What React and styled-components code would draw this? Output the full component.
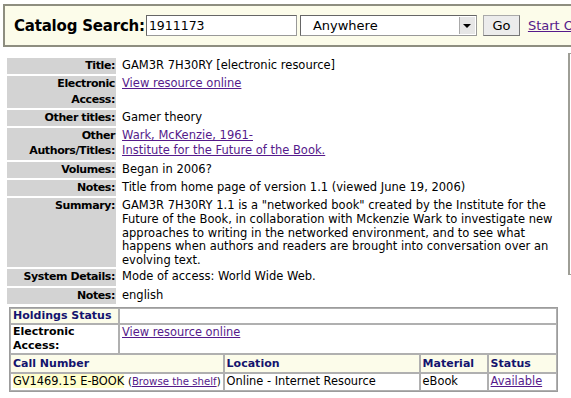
import React from 'react'
import styled, { createGlobalStyle } from 'styled-components'

const GlobalStyle = createGlobalStyle`
body{
    margin:0;
    background:#fff;
    font-family:"DejaVu Sans", Verdana, sans-serif;
    font-size:12px;
    color:#000;
    overflow:hidden;
}
a{
    color:#551a8b;
    text-decoration:underline;
}
`

const Page = styled.div`
width:760px;
padding:4px 0 0 3px;
`

const SearchBar = styled.form`
display:flex;
align-items:center;
height:39px;
background:#fcfcea;
border:2px solid #8e8e80;
border-right:none;
padding-left:9px;
margin:0;
`

const SearchLabel = styled.label`
font-weight:bold;
font-size:15px;
margin-right:1px;
letter-spacing:-0.2px;
`

const TextBox = styled.input`
box-sizing:border-box;
width:151px;
height:21px;
border:1px solid #999;
border-top-color:#666;
border-left-color:#666;
padding:0 2px;
font-family:"DejaVu Sans", sans-serif;
font-size:12.5px;
background:#fff;
`

const Select = styled.div`
box-sizing:border-box;
display:flex;
align-items:center;
width:177px;
height:21px;
margin-left:3px;
border:1px solid #999;
border-top-color:#666;
border-left-color:#666;
background:#fff;
font-size:13px;
padding-left:12px;
span{ flex:1; }
`

const Arrow = styled.div`
width:15px;
height:17px;
margin-right:1px;
background:#e6e6e6;
border-left:1px solid #aaa;
display:flex;
align-items:center;
justify-content:center;
&:after{
    content:'';
    border-left:4px solid transparent;
    border-right:4px solid transparent;
    border-top:4px solid #000;
}
`

const GoButton = styled.button`
box-sizing:border-box;
width:37px;
height:21px;
margin-left:6px;
background:#ececec;
border:1px solid #aaa;
border-right-color:#777;
border-bottom-color:#777;
font-family:"DejaVu Sans", sans-serif;
font-size:13px;
padding:0;
`

const StartOver = styled.a`
margin-left:8px;
font-size:13px;
white-space:nowrap;
`

const Body = styled.div`
display:grid;
grid-template-columns:553px 150px;
column-gap:10px;
align-items:start;
margin:9px 0 0 2px;
`

const DetailTable = styled.table`
width:553px;
border-spacing:2px;
`

const Label = styled.th`
width:108px;
background:#d3d3d3;
text-align:right;
vertical-align:top;
font-weight:bold;
font-size:11px;
letter-spacing:-0.4px;
padding:0 1px 1px 0;
line-height:15.3px;
white-space:nowrap;
`

const Value = styled.td`
vertical-align:top;
padding:${({small})=> small ? '1px 0 0 4px' : '0 0 1px 4px'};
font-size:11.5px;
line-height:${({small})=> small ? '13.6px' : '15.3px'};
white-space:nowrap;
`

const Sidebar = styled.div`
box-sizing:border-box;
margin-top:-3px;
height:222px;
background:#fff;
border:1px solid #9e9e96;
border-left:2px solid #9e9e96;
`

const HoldingsTable = styled.table`
width:549px;
margin-left:6px;
margin-top:1px;
border-spacing:0;
border:1px solid #9c9c9c;
border-bottom:none;
& + &{
    margin-top:0;
    border-top:none;
    border-bottom:1px solid #9c9c9c;
}
`

const Cell = styled.td`
border:1px solid #b0b0b0;
padding:${({pad})=> pad || '0 2px'};
font-size:${({head,bold})=> head || bold ? '11px' : '11.4px'};
line-height:14px;
vertical-align:top;
text-align:left;
white-space:nowrap;
background:${({head})=> head ? '#fcfcea' : '#fff'};
color:${({head})=> head ? '#14146e' : '#000'};
font-weight:${({head,bold})=> head || bold ? 'bold' : 'normal'};
width:${({w})=> w || 'auto'};
`

const Highlight = styled.span`
background:#ffffcc;
`

const Small = styled.span`
font-size:10.2px;
`

const details = [
    {label:'Title:', value:'GAM3R 7H30RY [electronic resource]'},
    {label:<>Electronic<br/>Access:</>, value:<a href="#">View resource online</a>},
    {label:'Other titles:', value:'Gamer theory'},
    {label:<>Other<br/>Authors/Titles:</>, value:<><a href="#">Wark, McKenzie, 1961-</a><br/><a href="#">Institute for the Future of the Book.</a></>},
    {label:'Volumes:', value:'Began in 2006?'},
    {label:'Notes:', value:'Title from home page of version 1.1 (viewed June 19, 2006)'},
    {label:'Summary:', small:true, value:<>GAM3R 7H30RY 1.1 is a "networked book" created by the Institute for the<br/>Future of the Book, in collaboration with Mckenzie Wark to investigate new<br/>approaches to writing in the networked environment, and to see what<br/>happens when authors and readers are brought into conversation over an<br/>evolving text.</>},
    {label:'System Details:', value:'Mode of access: World Wide Web.'},
    {label:'Notes:', value:'english'},
]

const CELL_HEAD = '2px 2px 1px'
const CELL_ROW = '0 2px 1px'

function App() {
    return (
        <Page>
            <GlobalStyle/>
            <SearchBar onSubmit={e=>e.preventDefault()}>
                <SearchLabel>Catalog Search:</SearchLabel>
                <TextBox defaultValue="1911173"/>
                <Select><span>Anywhere</span><Arrow/></Select>
                <GoButton>Go</GoButton>
                <StartOver href="#">Start Over</StartOver>
            </SearchBar>

            <Body>
                <DetailTable>
                    <tbody>
                        {details.map((d,i)=>(
                            <tr key={i}>
                                <Label>{d.label}</Label>
                                <Value small={d.small}>{d.value}</Value>
                            </tr>
                        ))}
                    </tbody>
                </DetailTable>
                <Sidebar/>
            </Body>

            <HoldingsTable>
                <tbody>
                    <tr>
                        <Cell head w="103px">Holdings Status</Cell>
                        <Cell></Cell>
                    </tr>
                    <tr>
                        <Cell bold>Electronic<br/>Access:</Cell>
                        <Cell><a href="#">View resource online</a></Cell>
                    </tr>
                </tbody>
            </HoldingsTable>
            <HoldingsTable>
                <tbody>
                    <tr>
                        <Cell head pad={CELL_HEAD} w="202px">Call Number</Cell>
                        <Cell head pad={CELL_HEAD} w="190px">Location</Cell>
                        <Cell head pad={CELL_HEAD} w="62px">Material</Cell>
                        <Cell head pad={CELL_HEAD}>Status</Cell>
                    </tr>
                    <tr>
                        <Cell pad={CELL_ROW}><Highlight>GV1469.15 E-BOOK</Highlight> <Small>(<a href="#">Browse the shelf</a>)</Small></Cell>
                        <Cell pad={CELL_ROW}>Online - Internet Resource</Cell>
                        <Cell pad={CELL_ROW}>eBook</Cell>
                        <Cell pad={CELL_ROW}><a href="#">Available</a></Cell>
                    </tr>
                </tbody>
            </HoldingsTable>
        </Page>
    )
}

export default App
